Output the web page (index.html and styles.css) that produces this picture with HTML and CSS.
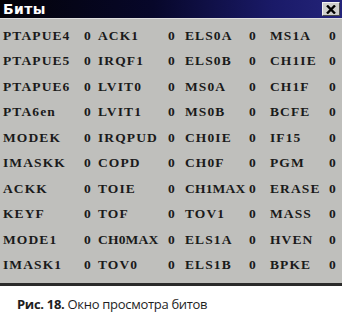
FILE: index.html
```html
<!DOCTYPE html>
<html lang="ru">
<head>
<meta charset="utf-8">
<title>Биты</title>
<link rel="stylesheet" href="styles.css">
</head>
<body>
<div class="window">
  <div class="titlebar">
    <span class="title">Биты</span>
    <span class="close"><svg width="10" height="9" viewBox="0 0 10 9"><path d="M1 0.5 L9 8.5 M9 0.5 L1 8.5" stroke="#000" stroke-width="2.4"/></svg></span>
  </div>
  <div class="bits">
    <span>PTAPUE4</span><span>0</span><span>ACK1</span><span>0</span><span>ELS0A</span><span>0</span><span>MS1A</span><span>0</span>
    <span>PTAPUE5</span><span>0</span><span>IRQF1</span><span>0</span><span>ELS0B</span><span>0</span><span>CH1IE</span><span>0</span>
    <span>PTAPUE6</span><span>0</span><span>LVIT0</span><span>0</span><span>MS0A</span><span>0</span><span>CH1F</span><span>0</span>
    <span>PTA6en</span><span>0</span><span>LVIT1</span><span>0</span><span>MS0B</span><span>0</span><span>BCFE</span><span>0</span>
    <span>MODEK</span><span>0</span><span>IRQPUD</span><span>0</span><span>CH0IE</span><span>0</span><span>IF15</span><span>0</span>
    <span>IMASKK</span><span>0</span><span>COPD</span><span>0</span><span>CH0F</span><span>0</span><span>PGM</span><span>0</span>
    <span>ACKK</span><span>0</span><span>TOIE</span><span>0</span><span class="tight">CH1MAX</span><span>0</span><span>ERASE</span><span>0</span>
    <span>KEYF</span><span>0</span><span>TOF</span><span>0</span><span>TOV1</span><span>0</span><span>MASS</span><span>0</span>
    <span>MODE1</span><span>0</span><span class="tight">CH0MAX</span><span>0</span><span>ELS1A</span><span>0</span><span>HVEN</span><span>0</span>
    <span>IMASK1</span><span>0</span><span>TOV0</span><span>0</span><span>ELS1B</span><span>0</span><span>BPKE</span><span>0</span>
  </div>
</div>
<p class="caption"><b>Рис. 18.</b> Окно просмотра битов</p>
</body>
</html>
```
FILE: styles.css
```css
html, body {
  margin: 0;
  padding: 0;
  background: #ffffff;
}
body {
  width: 342px;
  height: 327px;
  overflow: hidden;
}
.window {
  background: #bfbfbc;
  border-bottom: 3px solid #2a2a2a;
}
.titlebar {
  height: 18px;
  display: flex;
  align-items: center;
  justify-content: space-between;
  background: linear-gradient(to right, #030308 0%, #07072a 45%, #1a1a68 80%, #24247a 100%);
  border-bottom: 1px solid #dedede;
  padding: 0 2px 0 3px;
}
.title {
  color: #ffffff;
  font-family: "DejaVu Sans", sans-serif;
  font-weight: bold;
  font-size: 14px;
  line-height: 18px;
  letter-spacing: 0.4px;
}
.close {
  width: 16px;
  height: 12px;
  background: #cfcfcc;
  border-top: 1px solid #f2f2f2;
  border-left: 1px solid #f2f2f2;
  border-right: 1px solid #4a4a4a;
  border-bottom: 1px solid #4a4a4a;
  display: flex;
  align-items: center;
  justify-content: center;
}
.close svg {
  display: block;
}
.bits {
  display: grid;
  grid-template-columns: 81px 14px 70px 17px 64px 21px 59px 1fr;
  grid-auto-rows: 25.5px;
  align-items: center;
  padding: 4px 0 5px 3px;
  font-family: "Liberation Serif", serif;
  font-weight: bold;
  font-size: 13.5px;
  letter-spacing: 1.1px;
  color: #1a1a1a;
  white-space: nowrap;
}
.bits .tight {
  letter-spacing: 0.2px;
}
.caption {
  margin: 0;
  padding: 9px 0 0 17px;
  font-family: "Open Sans", sans-serif;
  font-size: 13px;
  color: #1e1e1e;
  letter-spacing: -0.3px;
}
.caption b {
  font-weight: 700;
}
```
